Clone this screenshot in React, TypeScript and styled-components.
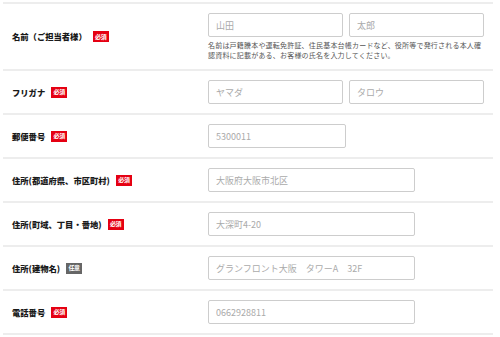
import styled, { createGlobalStyle } from 'styled-components';

const GlobalStyle = createGlobalStyle`
  html, body {
    margin: 0;
    padding: 0;
    background: #fff;
  }
  body {
    font-family: "Noto Sans CJK JP", "Noto Sans", sans-serif;
    color: #222;
  }
`;

const Form = styled.div`
  width: 490px;
  margin: 2px 0 0 3px;
`;

const Row = styled.div`
  display: grid;
  grid-template-columns: 205px 1fr;
  align-items: center;
  border-top: 2px solid #ededed;
  padding: 9px 0;
  &:last-child {
    border-bottom: 2px solid #ededed;
  }
`;

const Label = styled.div`
  display: flex;
  align-items: center;
  gap: 6px;
  padding-left: 9px;
  font-size: 8.3px;
  font-weight: 800;
  line-height: 1;
  color: #1a1a1a;
`;

const Badge = styled.span<{ $optional?: boolean }>`
  display: inline-flex;
  align-items: center;
  justify-content: center;
  width: 16px;
  height: 11px;
  background: ${(p) => (p.$optional ? '#666' : '#e50012')};
  color: #fff;
  font-size: 6px;
  font-weight: bold;
  letter-spacing: -0.3px;
`;

const Field = styled.div`
  display: flex;
  flex-direction: column;
`;

const Inputs = styled.div`
  display: flex;
  gap: 6px;
`;

const Input = styled.input<{ $w: number }>`
  box-sizing: border-box;
  width: ${(p) => p.$w}px;
  height: 24px;
  padding: 0 7px;
  border: 1px solid #cdcdcd;
  border-radius: 2px;
  background: #fff;
  font-family: "Noto Sans CJK JP", "Noto Sans", sans-serif;
  font-size: 9px;
  color: #333;
  outline: none;
  &::placeholder {
    color: #aaa;
  }
`;

const Note = styled.p`
  margin: 4px 0 0;
  width: 276px;
  font-size: 7px;
  letter-spacing: 0.2px;
  line-height: 9.5px;
  color: #555;
`;

type Item = {
  label: string;
  optional?: boolean;
  placeholders: string[];
  width: number;
  note?: string;
};

const items: Item[] = [
  {
    label: '名前（ご担当者様）',
    placeholders: ['山田', '太郎'],
    width: 135,
    note: '名前は戸籍謄本や運転免許証、住民基本台帳カードなど、役所等で発行される本人確認資料に記載がある、お客様の氏名を入力してください。',
  },
  { label: 'フリガナ', placeholders: ['ヤマダ', 'タロウ'], width: 135 },
  { label: '郵便番号', placeholders: ['5300011'], width: 138 },
  { label: '住所(都道府県、市区町村)', placeholders: ['大阪府大阪市北区'], width: 207 },
  { label: '住所(町域、丁目・番地)', placeholders: ['大深町4-20'], width: 207 },
  { label: '住所(建物名)', optional: true, placeholders: ['グランフロント大阪　タワーA　32F'], width: 207 },
  { label: '電話番号', placeholders: ['0662928811'], width: 207 },
];

export default function App() {
  return (
    <>
      <GlobalStyle />
      <Form>
        {items.map((item) => (
          <Row key={item.label}>
            <Label>
              {item.label}
              <Badge $optional={item.optional}>{item.optional ? '任意' : '必須'}</Badge>
            </Label>
            <Field>
              <Inputs>
                {item.placeholders.map((ph) => (
                  <Input key={ph} $w={item.width} placeholder={ph} />
                ))}
              </Inputs>
              {item.note && <Note>{item.note}</Note>}
            </Field>
          </Row>
        ))}
      </Form>
    </>
  );
}
